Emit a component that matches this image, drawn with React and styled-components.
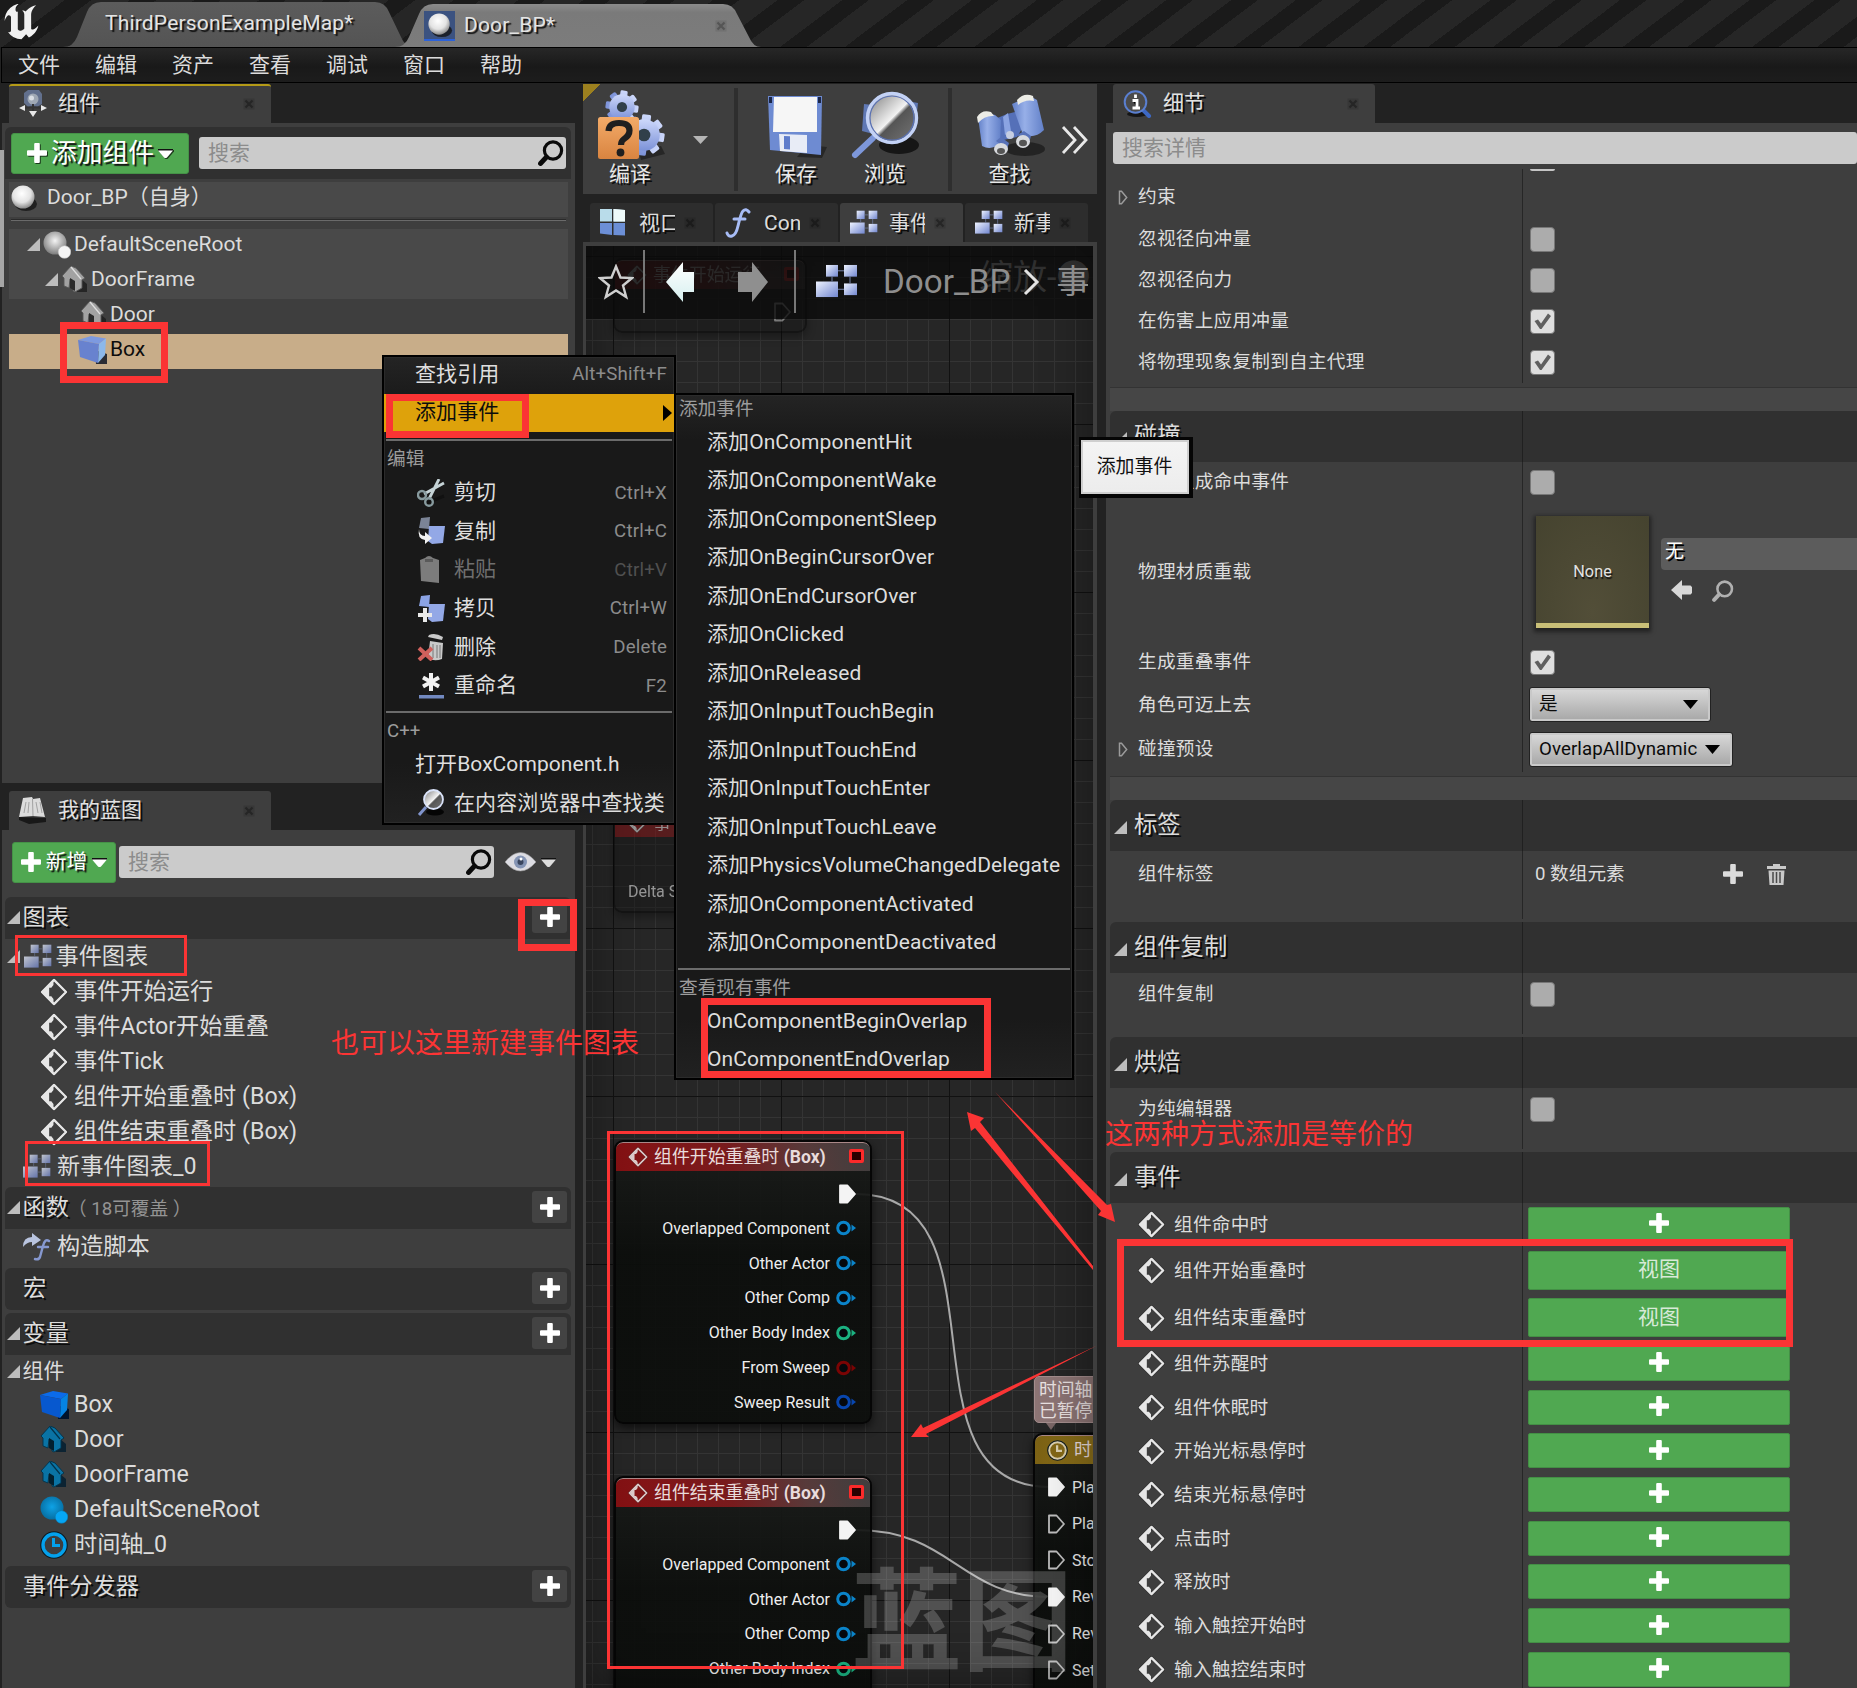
import React from 'react';
import styled, { createGlobalStyle, css } from 'styled-components';

const RED = '#fb3434';
const FONT = 'Roboto, "Noto Sans CJK SC", sans-serif';

const GlobalStyle = createGlobalStyle`
  *, *::before, *::after { box-sizing: border-box; }
  html, body { margin: 0; padding: 0; background: #222; overflow: hidden; }
  body { font-family: ${FONT}; font-size: 21px; color: #dcdcdc; }
  svg { display: block; flex: none; }
`;

/* ---------- icons ---------- */

const UnrealLogo = () => (
  <svg width="36" height="36" viewBox="4 4.9 15.4 14.8" preserveAspectRatio="none">
    <path fill="#f1f1f1" d="M19.13 13.729c-.206.997-1.126 3.557-4.06 4.942l-1.179-1.325-1.988 2a7.338 7.338 0 0 1-5.804-2.978 2.859 2.859 0 0 0 .65.123c.326.006.678-.114.678-.66v-5.394a.89.89 0 0 0-1.116-.89c-.92.212-1.656 2.509-1.656 2.509a7.304 7.304 0 0 1 2.528-5.597 7.408 7.408 0 0 1 3.73-1.721c-1.006.573-1.57 1.507-1.57 2.29 0 1.262.76 1.109.984.923v7.28a1.157 1.157 0 0 0 .148.256 1.075 1.075 0 0 0 .88.445c.76 0 1.747-.868 1.747-.868V9.172c0-.6-.452-1.324-.905-1.572 0 0 .838-.149 1.484.346a5.537 5.537 0 0 1 .387-.425c1.508-1.48 2.929-1.902 4.112-2.112 0 0-2.151 1.69-2.151 3.96 0 1.687.043 5.801.043 5.801.799.771 1.986-.342 3.059-1.441Z" />
  </svg>
);

const Defs = () => (
  <svg width="0" height="0" style={{ position: 'absolute' }}>
    <defs>
      <radialGradient id="ball" cx="45%" cy="35%" r="65%">
        <stop offset="0" stopColor="#fff" /><stop offset=".6" stopColor="#e3e3e3" /><stop offset="1" stopColor="#8a8a8a" />
      </radialGradient>
      <radialGradient id="ballGrey" cx="50%" cy="40%" r="60%">
        <stop offset="0" stopColor="#f4f4f4" /><stop offset="1" stopColor="#7d7d7d" />
      </radialGradient>
      <radialGradient id="ballBlue" cx="50%" cy="45%" r="60%">
        <stop offset="0" stopColor="#0ea2e6" /><stop offset="1" stopColor="#066a9c" />
      </radialGradient>
      <linearGradient id="blue" x1="0" y1="0" x2="1" y2="1">
        <stop offset="0" stopColor="#eef3ff" /><stop offset="1" stopColor="#7186cf" />
      </linearGradient>
      <linearGradient id="steel" x1="0" y1="0" x2="0" y2="1">
        <stop offset="0" stopColor="#cdd8fb" /><stop offset="1" stopColor="#7c92d8" />
      </linearGradient>
      <linearGradient id="orange" x1="0" y1="0" x2="0" y2="1">
        <stop offset="0" stopColor="#f3ab69" /><stop offset="1" stopColor="#d98440" />
      </linearGradient>
      <linearGradient id="lens" x1="0" y1="0" x2="1" y2="1">
        <stop offset="0" stopColor="#777" /><stop offset=".5" stopColor="#f2f2f2" /><stop offset=".56" stopColor="#555" /><stop offset="1" stopColor="#777" />
      </linearGradient>
      <linearGradient id="backArrow" x1="0" y1="0" x2="0" y2="1">
        <stop offset="0" stopColor="#fff" /><stop offset="1" stopColor="#d6efef" />
      </linearGradient>
      <linearGradient id="barrel" x1="0" y1="0" x2="1" y2="0">
        <stop offset="0" stopColor="#6280c8" /><stop offset=".4" stopColor="#97afe8" /><stop offset="1" stopColor="#6280c8" />
      </linearGradient>
    </defs>
  </svg>
);

const PlusIcon = ({ s = 20, c = '#fff' }) => (
  <svg width={s} height={s} viewBox="0 0 20 20"><path fill={c} d="M7.2 1a1 1 0 0 1 1-1h3.6a1 1 0 0 1 1 1v6.2H19a1 1 0 0 1 1 1v3.6a1 1 0 0 1-1 1h-6.2V19a1 1 0 0 1-1 1H8.200a1 1 0 0 1-1-1v-6.200H1a1 1 0 0 1-1-1V8.200a1 1 0 0 1 1-1h6.200z" /></svg>
);
const Glass = ({ s = 26, c = '#0a0a0a', w = 3.2 }) => (
  <svg width={s} height={s} viewBox="0 0 26 26" fill="none" stroke={c}>
    <circle cx="15" cy="10.500" r="8.600" strokeWidth={w} /><path d="M8.500 17L2.500 23.500" strokeWidth={w + 1.6} strokeLinecap="round" />
  </svg>
);
const Caret = ({ w = 15, h = 9, c = '#fff', edge }) => (
  <svg width={w} height={h} viewBox="0 0 15 9" preserveAspectRatio="none">
    {edge && <path d="M0 0H15V2H0z" fill="#111" />}
    <path fill={c} d={edge ? 'M0 1.500H15L9 8.500Q7.500 9.500 6 8.500Z' : 'M0 0H15L7.500 9Z'} />
  </svg>
);
const Expanded = ({ s = 13 }) => (
  <svg width={s} height={s} viewBox="0 0 13 13"><path fill="#bdbdbd" d="M13 0V13H0Z" /></svg>
);
const Collapsed = () => (
  <svg width="10" height="15" viewBox="0 0 10 15"><path d="M1.500 1.200L3.500 1.200L8.700 7.500L3.500 13.800H1.500Z" fill="none" stroke="#9b9b9b" strokeWidth="1.500" /></svg>
);
const CloseIcon = ({ c = '#252525' }) => (
  <svg width="12" height="12" viewBox="0 0 12 12"><path d="M.5 .5H11.500V11.500H.5Z" fill={c} opacity=".25" /><path d="M2.500 2.500L9.500 9.500M9.500 2.500L2.500 9.500" stroke={c} strokeWidth="2.200" /></svg>
);
const EventIcon = ({ s = 27, c = '#e6e6e6' }) => (
  <svg width={s} height={s} viewBox="0 0 26 26">
    <path d="M13 1.500L24.500 13L13 24.500L1.500 13Z" fill="none" stroke="#1b1b1b" strokeWidth="3" opacity=".4" />
    <path d="M13 1.800L24.200 13L13 24.200L1.800 13Z" fill="none" stroke={c} strokeWidth="2.200" strokeLinejoin="round" />
    <path d="M2 13L12.500 2.500V6.500L10.500 9H8.500V17H10.500L12.500 19.500V23.500Z" fill={c} />
  </svg>
);
const GraphIcon = ({ w = 28, h = 25, dim = 1 }) => (
  <svg width={w} height={h} viewBox="0 0 42 36" opacity={dim} preserveAspectRatio="none">
    <g fill="url(#blue)">
      <rect x="10" y="1" width="12" height="12" /><rect x="28" y="1" width="13" height="12" />
      <rect x="0" y="18" width="22" height="16" /><rect x="28" y="20" width="13" height="12" />
    </g>
    <path d="M22 7H28M34 13V20M16 13V18M22 26H28" stroke="#7683ab" strokeWidth="1" />
  </svg>
);
const SphereIcon = ({ s = 28 }) => (
  <svg width={s} height={s} viewBox="0 0 28 28"><ellipse cx="16" cy="20" rx="11" ry="7" fill="#151515" opacity=".8" /><circle cx="13" cy="13" r="11.500" fill="url(#ball)" /></svg>
);
const SceneIcon = ({ blue }) => (
  <svg width="28" height="28" viewBox="0 0 28 28">
    <circle cx="12" cy="12" r="11.500" fill={blue ? 'url(#ballBlue)' : 'url(#ballGrey)'} />
    <circle cx="21.500" cy="21" r="6.300" fill={blue ? '#06a6f4' : '#f5f5f5'} stroke={blue ? '#0b78ad' : '#bbb'} strokeWidth=".6" />
  </svg>
);
const HouseIcon = ({ blue }) => (
  <svg width="27" height="27" viewBox="0 0 27 27">
    <path d="M14 8L26 18V26H16Z" fill={blue ? '#001d30' : '#1d1d1d'} opacity=".8" />
    <path d="M1 10L10 0L15 2L24 12L21 14V22L14 26L12 25V15L9 13L8 22L3 20V12Z" fill={blue ? '#0a73a4' : '#a2a2a2'} stroke={blue ? '#02324a' : '#555'} strokeWidth=".9" />
    <path d="M10 1L20 13" stroke={blue ? '#02324a' : '#e0e0e0'} strokeWidth="1.200" />
    <path d="M9 12L14 15V25L9 22Z" fill={blue ? '#02202f' : '#2a2a2a'} />
  </svg>
);
const CubeIcon = ({ blue }) => (
  <svg width="29" height="28" viewBox="0 0 29 28">
    <path d="M17 14L29 18V28H18Z" fill={blue ? '#00142c' : '#2a2c33'} />
    <path d="M0 4L13 0L28 2.500L21 8Z" fill={blue ? '#0b6bea' : '#7d9ae0'} />
    <path d="M0 4L21 8L20 27L2 21Z" fill={blue ? '#0758cf' : '#6882cf'} />
    <path d="M21 8L28 2.500L27 19L20 27Z" fill={blue ? '#0483e2' : '#8cb8ea'} />
  </svg>
);
const ClockIcon = ({ s = 28, c = '#04a1ec', w = 3.4 }) => (
  <svg width={s} height={s} viewBox="0 0 28 28" fill="none">
    <circle cx="14" cy="14" r="12.800" stroke="#0d1a20" strokeWidth="2" />
    <circle cx="14" cy="14" r="11" stroke={c} strokeWidth={w} /><path d="M13.500 7V14.500H20" stroke={c} strokeWidth="3" />
  </svg>
);
const EyeIcon = () => (
  <svg width="31" height="20" viewBox="0 0 31 20">
    <path d="M0 10Q15.500-9 31 10Q15.500 28 0 10Z" fill="#dcdce2" stroke="#999" strokeWidth=".6" />
    <circle cx="15.500" cy="10" r="6.500" fill="#8494b4" /><circle cx="15.500" cy="10" r="3" fill="#39455e" /><circle cx="16" cy="7" r="1.500" fill="#fff" />
  </svg>
);
const BookIcon = () => (
  <svg width="28" height="27" viewBox="0 0 28 27">
    <path d="M0 20L27 21V25L10 27L0 23Z" fill="#181818" />
    <path d="M4 1L13 0L14 2L21 1L26 20L14 19L0 20Z" fill="#dcdcdc" /><path d="M13.500 2L14 19M7 5L5 16M10 5L9 16M17 5L19 16M21 5L23 16" stroke="#a2a2a2" strokeWidth="1" />
  </svg>
);
const ComponentsIcon = () => (
  <svg width="28" height="27" viewBox="0 0 28 27">
    <path d="M5 3L9 0H20L23 4V14L18 17H9L5 13Z" fill="#62708d" /><circle cx="14" cy="9" r="5.500" fill="#9fa8b4" /><circle cx="12.500" cy="8" r="2.500" fill="#d9dee4" />
    <path d="M14 14V23M14 17L4 18M14 17L24 18" stroke="#333" strokeWidth="2" />
    <path d="M10 21H18L14 27ZM0 18L6 15V21ZM28 18L22 15V21Z" fill="#e8e8e8" />
  </svg>
);
const DetailsIcon = () => (
  <svg width="29" height="28" viewBox="0 0 29 28">
    <ellipse cx="14" cy="24" rx="10" ry="3" fill="#151515" />
    <path d="M19 19L26 26" stroke="#3d68c4" strokeWidth="4" strokeLinecap="round" />
    <circle cx="12.500" cy="12" r="10.800" fill="#4b4b4b" stroke="#5a7fd0" strokeWidth="2" />
    <path d="M12.500 4.500V8M9.500 10.500H14V17.500M9.500 18H17" stroke="#fff" strokeWidth="2.800" />
  </svg>
);
const WindowsIcon = () => (
  <svg width="26" height="27" viewBox="0 0 26 27">
    <path d="M0 0H12V12.500H0ZM13.500 0L25 1V12.500H13.500Z" fill="#b9dcea" /><path d="M13.500 0L25 1V12.500H13.500Z" fill="#eefafa" />
    <path d="M0 14H12V26L0 24.500ZM13.500 14H25V26.500L13.500 26Z" fill="#6c8fd6" />
  </svg>
);
const FunctionIcon = () => (
  <svg width="26" height="30" viewBox="0 0 26 30">
    <path d="M24 4Q21 0 18 3Q16 5 13 18Q11 27 7 28Q3 29 2 25M9 11H20" fill="none" stroke="#a7bcf5" strokeWidth="3" strokeLinecap="round" />
  </svg>
);
const ConstructIcon = () => (
  <svg width="28" height="28" viewBox="0 0 28 28">
    <path d="M0 14Q0 4 9 4V0L18 7L9 13V9Q4 9 0 14Z" fill="#b9c4df" />
    <path d="M26 8Q22 5 20 13L17 24Q16 27 12 26M15 14H25" fill="none" stroke="#8698cf" strokeWidth="2.400" strokeLinecap="round" />
  </svg>
);
const Gear = ({ x, y, r }) => (
  <g transform={`translate(${x} ${y})`} fill="url(#steel)">
    {[0, 45, 90, 135].map((a) => <rect key={a} x={-r * 0.22} y={-r} width={r * 0.44} height={r * 2} rx="1.500" transform={`rotate(${a + 8})`} />)}
    <circle r={r * 0.77} /><circle r={r * 0.31} fill="#31404a" />
  </g>
);
const CompileIcon = () => (
  <svg width="70" height="70" viewBox="0 0 70 70">
    <path d="M42 62L64 56L68 64L44 70Z" fill="#262626" />
    <Gear x={25} y={17} r={16.5} /><Gear x={47} y={45} r={20.500} />
    <rect x="1" y="27" width="41" height="42" rx="2.500" fill="url(#orange)" />
    <path d="M11.500 41Q12 33 22 33Q32.500 33 32.500 40.500Q32.500 45.500 27 49Q24 51 24 55" fill="none" stroke="#1f1f1f" strokeWidth="6.200" />
    <circle cx="23.500" cy="62.500" r="3.900" fill="#1f1f1f" />
  </svg>
);
const SaveIcon = () => (
  <svg width="62" height="64" viewBox="0 0 62 64">
    <path d="M40 50L60 52L55 63L30 62Z" fill="#222" opacity=".8" />
    <path d="M1 1H55L54 60L3 55Z" fill="#6e8bd2" /><path d="M7 2H50V37H6Z" fill="#f6f6f6" />
    <path d="M12 39L40 40V58L13 56Z" fill="#e8ecf6" /><path d="M17 41L23 41.300V54.500L17 54Z" fill="#5e7ccb" />
    <rect x="2" y="2" width="3" height="6" fill="#1c2748" /><rect x="51" y="2" width="3" height="6" fill="#1c2748" />
  </svg>
);
const BrowseIcon = () => (
  <svg width="70" height="68" viewBox="0 0 70 68">
    <ellipse cx="48" cy="54" rx="20" ry="9" fill="#161616" />
    <path d="M13 13L30 15V45L11 40ZM56 10L67 12L64 40H56Z" fill="#5f78b4" />
    <path d="M22 47L4 64" stroke="#7d97da" strokeWidth="6" strokeLinecap="round" />
    <circle cx="41" cy="27" r="24.500" fill="url(#lens)" stroke="#c3d2f6" strokeWidth="3.400" />
    <circle cx="41" cy="27" r="22" fill="none" stroke="#5870b4" strokeWidth="1.200" />
  </svg>
);
const FindIcon = () => (
  <svg width="68" height="66" viewBox="0 0 68 66">
    <ellipse cx="48" cy="56" rx="20" ry="7" fill="#1d1d1d" opacity=".8" />
    <path d="M18 26L30 21L42 18L46 34L40 44L22 48Z" fill="#5570b8" />
    <path d="M26 24L31 20L34 38L28 42Z" fill="#8ba4e2" />
    <path d="M1 24Q9 18 18 22L24 27L23 50Q15 58 5 53Z" fill="url(#barrel)" /><path d="M0 24Q5 16 14 19L17 23Q8 22 1 30Z" fill="#ecece6" />
    <path d="M35 11L53 3L60 7L67 37Q58 46 46 42Z" fill="url(#barrel)" /><path d="M40 7Q47-1 56 3L57 8Q48 6 41 12Z" fill="#ecece6" />
    <path d="M19 48L24 44L32 50L30 56ZM40 42L47 38L54 43L52 50Z" fill="#5872b8" />
    <ellipse cx="24" cy="56" rx="7" ry="6" fill="#d8dade" /><ellipse cx="24" cy="58" rx="4" ry="3" fill="#555" />
    <ellipse cx="46" cy="48.500" rx="7" ry="6.500" fill="#d8dade" /><ellipse cx="46" cy="50" rx="4" ry="3.300" fill="#555" /><circle cx="33" cy="42" r="4" fill="#c5cde2" />
  </svg>
);
const ScissorsIcon = () => (
  <svg width="28" height="28" viewBox="0 0 28 28" fill="none">
    <path d="M10 24L27 17" stroke="#111" strokeWidth="3" />
    <path d="M7 15L27 4M12 20L22 0" stroke="#c5d3d6" strokeWidth="2.800" />
    <circle cx="5" cy="16" r="4" stroke="#879a9e" strokeWidth="2.400" /><circle cx="12" cy="23" r="3.800" stroke="#879a9e" strokeWidth="2.400" />
  </svg>
);
const CopyIcon = ({ plus }) => (
  <svg width="28" height="28" viewBox="0 0 28 28">
    <path d="M4 1L13 0L12 12L2 11Z" fill={plus ? '#8ba3e4' : '#7b8496'} /><path d="M12 9L28 9L26 26L15 27L11 24Z" fill="#93a8e6" />
    {plus ? <path d="M8 13V27M1 20H15" stroke="#e9e9e9" strokeWidth="4" /> : <path d="M2 12Q2 19 8 19V15L15 21L8 27V23Q0 22 2 12Z" fill="#f2f2f2" />}
  </svg>
);
const PasteIcon = () => (
  <svg width="28" height="28" viewBox="0 0 28 28"><path d="M3 4L8 2Q12-2 16 2L22 4V27L4 25Z" fill="#7c7c7c" /><path d="M8 3H16V6H8Z" fill="#5a5a5a" /></svg>
);
const DeleteIcon = () => (
  <svg width="28" height="28" viewBox="0 0 28 28">
    <path d="M12 2Q18-1 26 4L25 7L11 4ZM13 8L26 10L25 26Q17 29 11 25Z" fill="#c9c9c9" /><path d="M16 11V25M20 12V25M23 12V25" stroke="#777" />
    <path d="M2 15L15 27M15 15L2 27" stroke="#d0605c" strokeWidth="4" />
  </svg>
);
const RenameIcon = () => (
  <svg width="28" height="28" viewBox="0 0 28 28"><path d="M14 1V19M6 5.500L22 14.500M22 5.500L6 14.500" stroke="#f1f1f1" strokeWidth="4" /><rect x="2" y="23" width="25" height="3.500" fill="#7289c0" /></svg>
);
const BrowserIcon = () => (
  <svg width="28" height="28" viewBox="0 0 28 28">
    <ellipse cx="18" cy="23" rx="9" ry="3.500" fill="#050505" /><path d="M9 18L2 26" stroke="#8094cc" strokeWidth="3" />
    <circle cx="16.500" cy="10.500" r="9.500" fill="url(#lens)" stroke="#dbe4fa" strokeWidth="1.800" />
  </svg>
);
const TrashIcon = () => (
  <svg width="19" height="21" viewBox="0 0 19 21"><path d="M6 0H13V2H19V5H0V2H6ZM1.500 6.500H17.500L16.500 21H2.500Z" fill="#c9c9c9" /><path d="M6 8V19M9.500 8V19M13 8V19" stroke="#4a4a4a" strokeWidth="1.500" /></svg>
);
const UseArrow = () => (
  <svg width="21" height="20" viewBox="0 0 21 20"><path d="M0 10L11 0V5.500H19.500L21 7V13L19.500 14.500H11V20Z" fill="#d8d8d8" /></svg>
);
const CheckMark = () => (
  <svg width="19" height="18" viewBox="0 0 19 18"><path d="M1.500 9L5 7.500L8 11.500L15 1.500L18 4L8.500 17H7Z" fill="#5f5f5f" /></svg>
);

/* ---------- window frame ---------- */

const Window = styled.div`
  position: relative; width: 1857px; height: 1688px; overflow: hidden;
  background: #222; display: flex; flex-direction: column; line-height: 1.2; white-space: nowrap;
`;
const TitleBar = styled.header`
  height: 47px; display: flex; align-items: flex-end; padding-left: 3px; flex: none;
  background: repeating-linear-gradient(143deg, #1a1a1a 0 16px, #262626 16px 39px);
`;
const LogoBox = styled.div`width: 60px; height: 43px;`;
const WindowTab = styled.div`
  width: ${(p) => p.w}px; height: ${(p) => p.h}px; margin-right: ${(p) => p.overlap || 0}px;
  display: flex; align-items: center; padding: 0 0 ${(p) => (p.active ? 0 : 1)}px ${(p) => p.pad}px; color: #e4e4e4;
  text-shadow: 2px 2px 1px #111; letter-spacing: .18px;
  background: ${(p) => (p.active ? 'linear-gradient(#8b8b8b, #7a7a7a 20%, #7c7c7c)' : 'linear-gradient(#5c5c5c, #545454)')};
  clip-path: path('${(p) => `M0 ${p.h}Q10 ${p.h} 14 ${p.h - 10}L24 10Q28 0 38 0H${p.w - 38}Q${p.w - 28} 0 ${p.w - 24} 10L${p.w - 12} ${p.h - 10}Q${p.w - 8} ${p.h} ${p.w} ${p.h}Z`}');
`;
const TabThumb = styled.span`
  width: 31px; height: 30px; margin-right: 9px; background: #3b5280; border-bottom: 2px solid #2c62d9;
  display: grid; place-items: center;
`;
const TabClose = styled.span`margin-left: auto; margin-right: 34px;`;
const MenuBar = styled.nav`
  height: 36px; margin: 0 0 1px 1px; display: flex; align-items: center; gap: 35px; padding: 1px 0 0 16px; flex: none;
  border: 1px solid #000; border-width: 1px 0 1.500px 1px;
  background: linear-gradient(#272727, #191919 55%, #1d1d1d);
`;
const Body = styled.main`
  flex: 1; min-height: 0; display: flex; gap: 8px; padding-left: 2px;
`;
const LeftColumn = styled.div`width: 573px; display: flex; flex-direction: column; gap: 8px; flex: none;`;
const CenterColumn = styled.div`width: 514px; display: flex; flex-direction: column; flex: none;`;
const RightColumn = styled.div`flex: 1; min-width: 0; display: flex; flex-direction: column; margin-left: 1px;`;

const PanelTab = styled.div`
  width: 262px; height: 39px; margin-left: 7px; background: #3e3e3e; flex: none;
  border-top: ${(p) => (p.focused ? '2px solid #b49a17' : 0)}; border-radius: 3px 3px 0 0;
  display: flex; align-items: center; padding: 0 16px ${(p) => (p.focused ? 2 : 0)}px 10px; text-shadow: 2px 2px 0 #0c0c0c; color: #e2e2e2;
  > span { margin-left: 11px; margin-right: auto; }
`;
const Panel = styled.section`
  background: #3e3e3e; flex: ${(p) => (p.h ? 'none' : 1)}; height: ${(p) => (p.h ? `${p.h}px` : 'auto')};
  min-height: 0; display: flex; flex-direction: column;
`;
const PanelGroup = styled.div`flex: 1; min-height: 0; display: flex; flex-direction: column;`;
const SearchField = styled.div`
  height: 32px; background: #cbcbcb; border-radius: 3px; flex: ${(p) => (p.w ? 'none' : 1)}; width: ${(p) => p.w || 0}px;
  display: flex; align-items: center; justify-content: space-between; padding: 0 2px 0 9px; color: #8c8c8c;
  line-height: 30px;
`;
const GreenButton = styled.button`
  font: inherit; font-size: ${(p) => p.size}px; width: ${(p) => p.w}px; height: 41px; padding: 0; border: 1px solid #459247; border-radius: 3px;
  background: #50a851; color: #fff; text-shadow: 2px 2px 1px #111; display: flex; align-items: center; justify-content: center; gap: ${(p) => p.gap}px;
  svg { filter: ${(p) => (p.soft ? 'none' : 'drop-shadow(1px 1px 0 #1c3a1c)')}; }
`;

/* ---------- component tree ---------- */

const ComponentsBar = styled.div`
  margin: 4px 4px 0 3px; height: 52px; background: #303030; border-radius: 6px 6px 0 0; display: flex; align-items: center;
  padding: 0 5px 0 6px; gap: 10px;
`;
const TreeRow = styled.div`
  height: 35px; margin: ${(p) => p.mt || 0}px 7px 0; padding: 0 0 4px ${(p) => p.indent}px; display: flex; align-items: center; flex: none; gap: ${(p) => p.gap || 3}px;
  ${(p) => p.raised && css`background: #494949;`}
  ${(p) => p.selected && css`background: #c8ad89; color: #0c0c0c;`}
`;
const TreeRule = styled.div`height: 2px; margin: 2px 9px 8px; background: #6a6a6a; border-top: 1px solid #2a2a2a; flex: none;`;

/* ---------- my blueprint ---------- */

const BlueprintBar = styled.div`height: 67px; display: flex; align-items: center; padding: 0 0 3px 10px; gap: 3px; flex: none;`;
const ViewOptions = styled.div`display: flex; align-items: center; gap: 5px; margin-left: 8px;`;
const GroupHeader = styled.div`
  height: 42px; margin: ${(p) => p.mt || 0}px 4px 0 3px; background: #303030; border-radius: 6px 6px ${(p) => (p.empty ? '6px 6px' : '0 0')};
  display: flex; align-items: center; padding: 0 4px 2px ${(p) => (p.empty ? 18 : 1.5)}px; flex: none;
  font-size: 23.2px; text-shadow: 2px 2px 0 #0c0c0c; gap: 3px; line-height: 40px;
`;
const Muted = styled.span`font-size: 18.67px; color: #949494; text-shadow: none; margin-left: -4px; padding-top: 4px;`;
const AddButton = styled.button`
  margin: 0 0 0 auto; width: 35px; height: 32px; padding: 0 0 1px; border: 0; border-radius: 3px; background: #434343; display: grid; place-items: center;
`;
const ListRow = styled.div`
  height: ${(p) => p.h || 35}px; display: flex; align-items: center; padding-left: ${(p) => p.indent}px; gap: ${(p) => p.gap || 6}px; flex: none;
  font-size: ${(p) => p.size || 23.2}px; line-height: 35px;
`;

/* ---------- toolbar ---------- */

const Toolbar = styled.div`
  height: 110px; background: linear-gradient(135deg, #9c801f 0 12.500px, #3e3e3e 12.500px); display: flex; align-items: stretch; flex: none; padding-top: 7px;
`;
const Tool = styled.div`
  width: ${(p) => p.w}px; margin-left: ${(p) => p.ml || 0}px; display: flex; flex-direction: column; align-items: center; justify-content: flex-end;
  padding-bottom: 6px; gap: ${(p) => p.gap ?? 1}px; text-shadow: 2px 2px 0 #0c0c0c; color: #e8e8e8; line-height: 28px;
`;
const ToolRule = styled.div`width: 4px; background: #2e2e2e; margin: -3px 0 3px ${(p) => p.ml}px;`;
const ToolCaret = styled.div`align-self: center; margin: -5px 0 0 ${(p) => p.ml}px;`;
const DocTabs = styled.div`height: 48px; padding: 9px 0 0 7px; display: flex; gap: 2px; flex: none;`;
const DocTab = styled.div`
  width: 123px; height: 39px; background: ${(p) => (p.active ? '#3e3e3e' : '#2d2d2d')}; border-radius: 3px 3px 0 0; display: flex; align-items: center;
  padding-left: 10px; text-shadow: 2px 2px 0 #0c0c0c;
`;
const DocIcon = styled.span`width: 39px;`;
const DocName = styled.span`width: 36px; overflow: hidden; margin-right: 9px; line-height: 32px;`;

/* ---------- graph ---------- */

const GraphFrame = styled.div`flex: 1; min-height: 0; border: solid #3e3e3e; border-width: 4px 4px 0 3px; display: flex;`;
const Graph = styled.div`
  flex: 1; position: relative; overflow: hidden; background-color: #262626;
  background-image:
    linear-gradient(90deg, #111 1.500px, transparent 1.500px), linear-gradient(#111 1.500px, transparent 1.500px),
    linear-gradient(90deg, #343434 1px, transparent 1px), linear-gradient(#343434 1px, transparent 1px);
  background-size: 168px 168px, 168px 168px, 21px 21px, 21px 21px;
  background-position: 27px 10px;
  &::after { content: ''; position: absolute; inset: 0; box-shadow: inset 0 0 50px rgba(0,0,0,.4); pointer-events: none; }
`;
const Canvas = styled.div`position: absolute; left: -586px; top: -246px; width: 1857px; height: 1688px; font-size: 16px; color: #eee;`;
const Wires = styled.svg`position: absolute; inset: 0;`;
const Node = styled.div`
  position: absolute; left: ${(p) => p.x}px; top: ${(p) => p.y}px; width: ${(p) => p.w}px; height: ${(p) => p.h}px;
  border: 2px solid #060606; border-radius: 9px; background: ${(p) => (p.faded ? 'rgba(20,20,20,.75)' : 'linear-gradient(rgba(26,28,26,.93), rgba(12,14,12,.93) 40%)')};
  box-shadow: 0 4px 10px rgba(0,0,0,.6); overflow: hidden; opacity: ${(p) => (p.faded ? 0.55 : 1)};
`;
const NodeTitle = styled.div`
  height: 29px; display: flex; align-items: center; gap: 6px; padding: 0 6px 0 12px; font-size: 17.9px; color: #e9dcdc; border-top: 1px solid #a88;
  border-radius: 7px 7px 0 0;
  background: ${(p) => (p.gold ? 'linear-gradient(100deg, #7b6114, #987a1d 50%, #8a6d18)' : 'linear-gradient(75deg, #871113 0, #781b1d 45%, #573a3a 75%, #3f3e3e)')};
  b { font-size: 17.500px; }
  > i { margin-left: auto; width: 15px; height: 14px; border: 3.500px solid #fb2a2a; border-radius: 2px; background: #2a0000; margin-top: -3px; }
`;
const PinRow = styled.div`
  height: ${(p) => p.h || 34.8}px; display: flex; align-items: center; gap: ${(p) => p.gap || 6}px;
  ${(p) => (p.left ? css`padding-left: 13px;` : css`justify-content: flex-end; padding-right: 14px;`)}
`;
const PinStack = styled.div`padding-top: ${(p) => p.top}px; margin-top: ${(p) => p.pull || 0}px;`;
const Bubble = styled.div`
  position: absolute; left: 1034px; top: 1376px; width: 90px; height: 47px; border-radius: 5px; background: #8c7474; border: 1px solid #a38c8c;
  color: #e8e0e0; font-size: 17.8px; line-height: 21px; padding: 2px 4px;
  &::after { content: ''; position: absolute; left: 11px; top: 46px; border: 5px solid transparent; border-top: 7px solid #7a6666; }
`;
const Watermark = styled.div`
  position: absolute; left: 851px; top: 1544px; font: 700 111px/140px "Noto Sans CJK SC", sans-serif; color: rgba(255,255,255,.2);
`;
const ZoomLabel = styled.div`position: absolute; left: 979px; top: 252px; font-size: 34px; line-height: 50px; color: #b4b4b4;`;
const Breadcrumb = styled.div`
  position: absolute; left: 0; top: 0; width: 100%; height: 73px; background: rgba(10,10,10,.76); display: flex; align-items: center; z-index: 1;
  font-size: 33.2px; color: #8e8e8e; padding: 0 0 2px 12px; overflow: hidden;
`;
const CrumbRule = styled.div`width: 2px; height: 63px; background: #777; margin: ${(p) => p.m};`;
const CrumbText = styled.span`margin-left: ${(p) => p.ml}px; width: ${(p) => p.w}px; overflow: hidden; line-height: 46px;`;
const NavArrow = styled.span`width: ${(p) => p.w}px;`;

/* ---------- details ---------- */

const DetailsSearch = styled.div`height: 46px; padding: 9px 0 0 7px; display: flex; flex: none;`;
const PropertyList = styled.div`flex: 1; min-height: 0; overflow: hidden; padding-left: 4px; font-size: 18.67px;`;
const PropertyRow = styled.div`
  display: flex; height: ${(p) => p.h + (p.extra || 0)}px;
`;
const NameCell = styled.div`
  width: 413px; border-right: 1.500px solid #262626; display: flex; align-items: center; padding-left: 28px; padding-bottom: ${(p) => p.extra || 0}px; line-height: 24px;
  letter-spacing: .22px;
`;
const ExpandSlot = styled.span`width: 20px; margin-left: -20px;`;
const EventLabel = styled.span`margin-left: 9px;`;
const ValueCell = styled.div`flex: 1; min-width: 0; display: flex; align-items: center; padding-left: ${(p) => p.pad ?? 6.5}px; padding-bottom: ${(p) => p.extra || 0}px;`;
const Category = styled.div`
  height: 51px; margin-top: ${(p) => p.mt || 0}px; background: #303030; border-radius: 6px 0 0 0; display: flex; font-size: 23.3px; text-shadow: 2px 2px 0 #0c0c0c;
`;
const CategoryName = styled.div`width: 413px; border-right: 1.500px solid #202020; padding: 0 0 0 4px; display: flex; align-items: center; gap: 7px; svg { margin-top: 3px; }`;
const Band = styled.div`height: 24px; margin-top: ${(p) => p.mt}px; background: #464646; border-top: 1.500px solid #333;`;
const Checkbox = styled.span`
  width: 25px; height: 25px; border-radius: 4px; background: ${(p) => (p.on ? '#dedede' : '#acacac')}; border: 1px solid #777; display: grid; place-items: center; flex: none;
`;
const Sliver = styled.div`height: 2px; width: 25px; background: #c5c5c5; border-radius: 0 0 3px 3px; align-self: flex-start;`;
const Thumbnail = styled.div`
  width: 113px; height: 112px; background: radial-gradient(at 50% 90%, #524e38, #45432f); border-bottom: 5px solid #c9bf77; box-shadow: 0 2px 4px 2px #222;
  display: grid; place-items: center; font-size: 16.300px; text-shadow: 1px 2px 1px #111; color: #e2e2e2; flex: none; padding-top: 5px;
`;
const AssetPicker = styled.div`flex: 1; margin-left: 12px; height: 62px; margin-top: -6px; display: flex; flex-direction: column; gap: 10px;`;
const AssetName = styled.div`height: 32px; background: #5c5c5c; border-radius: 4px 0 0 4px; padding: 3px 0 0 4px; text-shadow: 2px 2px 0 #000; color: #fff; flex: none; font-size: 19px;`;
const AssetActions = styled.div`display: flex; gap: 20px; padding-left: 10px;`;
const Select = styled.div`
  width: ${(p) => p.w}px; height: 35px; border: 1px solid #222; border-radius: 3px; background: linear-gradient(#dadada, #a6a6a6); box-shadow: inset 0 0 0 2px #c9c9c9;
  color: #0b0b0b; display: flex; align-items: center; justify-content: space-between; padding: 0 12px 0 9px; letter-spacing: .1px;
`;
const ArrayActions = styled.div`display: flex; gap: 24px; margin-left: 98px;`;
const EventButton = styled.button`
  width: 262px; height: ${(p) => p.h}px; border: 1px solid #438f45; border-radius: 2px; background: #50a851; padding: 0 0 2px; display: grid; place-items: center;
  font: inherit; font-size: 21px; color: #d8ead8; line-height: 24px; margin-top: -1px;
`;

/* ---------- menus and notes over the editor ---------- */

const Menu = styled.div`
  position: absolute; left: ${(p) => p.x}px; top: ${(p) => p.y}px; width: ${(p) => p.w}px; height: ${(p) => p.h}px;
  border: 2px solid #000; background: linear-gradient(#242424, #191919 45px, #191919 calc(100% - 60px), #212121); box-shadow: inset 0 0 0 1px #2b2b2b;
`;
const MenuItem = styled.div`
  height: ${(p) => p.h || 38.5}px; padding: 0 7px ${(p) => p.pb || 0}px ${(p) => p.pad}px; display: flex; align-items: center; gap: 9px; color: #dedede; letter-spacing: .07px;
  ${(p) => p.hot && css`background: #dea20b; color: #0c0c0c; padding-right: 2px;`}
  ${(p) => p.off && css`color: #6f6f6f;`}
`;
const Shortcut = styled.span`margin-left: auto; font-size: 18.67px; letter-spacing: .18px; color: ${(p) => (p.off ? '#505050' : '#8c8c8c')};`;
const MenuHeading = styled.div`height: ${(p) => p.h}px; padding-left: 3px; font-size: 18.67px; line-height: ${(p) => p.h}px; color: #9c9c9c;`;
const MenuRule = styled.div`height: ${(p) => p.h}px; padding: ${(p) => p.t}px 2px 0; &::before { content: ''; display: block; height: 2px; background: #6b6b6b; }`;
const SubArrow = styled.span`margin-left: auto;`;
const Tooltip = styled.div`
  position: absolute; left: 1079px; top: 437px; width: 114px; height: 61px; border: solid #050505; border-width: 3px 4px 4px 2px; background: linear-gradient(#f4f4f4, #ececec);
  box-shadow: inset 0 0 0 2px #cfcfcf; color: #111; font-size: 18.9px; display: grid; place-items: center; padding-right: 1px;
`;
const Outline = styled.div`
  position: absolute; left: ${(p) => p.x}px; top: ${(p) => p.y}px; width: ${(p) => p.w}px; height: ${(p) => p.h}px; border: ${(p) => p.b}px solid ${RED};
`;
const Note = styled.div`position: absolute; left: ${(p) => p.x}px; top: ${(p) => p.y}px; font-size: 28px; line-height: 40px; color: ${RED};`;
const Arrows = styled.svg`position: absolute; left: 0; top: 0;`;
const EdgeStrip = styled.div`position: absolute; left: 0; top: 150px; width: 4px; height: 137px; background: #a6a6a6;`;

const ExecPin = ({ on }) => (
  <svg width="17" height="20" viewBox="0 0 17 20"><path d="M1 1.500H8.500L16 10L8.500 18.500H1Z" fill={on ? '#f4f4f4' : 'none'} stroke={on ? '#f4f4f4' : '#bdbdbd'} strokeWidth="1.800" strokeLinejoin="round" /></svg>
);
const DataPin = ({ c }) => (
  <svg width="20" height="16" viewBox="0 0 20 16"><circle cx="7.500" cy="8" r="5.800" fill="#05080c" stroke={c} strokeWidth="3" /><path d="M15.500 4.500L20 8L15.500 11.500Z" fill={c} /></svg>
);

const OVERLAP_PINS = [
  ['Overlapped Component', '#0b84c9'], ['Other Actor', '#0b84c9'], ['Other Comp', '#0b84c9'],
  ['Other Body Index', '#1bb281'], ['From Sweep', '#7a0404'], ['Sweep Result', '#0846ae'],
];
const EventNode = ({ y, title }) => (
  <Node x={614} y={y} w={258} h={284}>
    <NodeTitle><EventIcon s={20} c="#dccaca" /><span>{title} <b>(Box)</b></span><i /></NodeTitle>
    <PinRow h={46}><ExecPin on /></PinRow>
    <PinStack pull={-6}>
      {OVERLAP_PINS.map(([n, c]) => <PinRow key={n}>{n}<DataPin c={c} /></PinRow>)}
    </PinStack>
  </Node>
);

const TIMELINE_PINS = [['Play', 1], ['Play from Start', 0], ['Stop', 0], ['Reverse', 1], ['Reverse from End', 0], ['Set New Time', 0]];

const Prop = ({ h, extra, name, expand, pad, children }) => (
  <PropertyRow h={h} extra={extra}>
    <NameCell extra={extra}>{expand && <ExpandSlot><Collapsed /></ExpandSlot>}{name}</NameCell>
    <ValueCell extra={extra} pad={pad}>{children}</ValueCell>
  </PropertyRow>
);
const Check = ({ on }) => <Checkbox on={on ? 1 : 0}>{on && <CheckMark />}</Checkbox>;
const Cat = ({ name, mt }) => <Category mt={mt}><CategoryName><Expanded />{name}</CategoryName></Category>;
const Group = ({ name, note, empty, mt }) => (
  <GroupHeader mt={mt} empty={empty}>{!empty && <Expanded />}<span>{name}</span>{note && <Muted>{note}</Muted>}<AddButton><PlusIcon /></AddButton></GroupHeader>
);

const DETAIL_EVENTS = [
  ['组件命中时'], ['组件开始重叠时', 1], ['组件结束重叠时', 1], ['组件苏醒时'], ['组件休眠时'], ['开始光标悬停时'],
  ['结束光标悬停时'], ['点击时'], ['释放时'], ['输入触控开始时'], ['输入触控结束时'],
];
const ADD_EVENTS = [
  'OnComponentHit', 'OnComponentWake', 'OnComponentSleep', 'OnBeginCursorOver', 'OnEndCursorOver', 'OnClicked', 'OnReleased',
  'OnInputTouchBegin', 'OnInputTouchEnd', 'OnInputTouchEnter', 'OnInputTouchLeave', 'PhysicsVolumeChangedDelegate',
  'OnComponentActivated', 'OnComponentDeactivated',
];
const EDIT_ITEMS = [
  ['剪切', 'Ctrl+X', <ScissorsIcon />], ['复制', 'Ctrl+C', <CopyIcon />], ['粘贴', 'Ctrl+V', <PasteIcon />, true],
  ['拷贝', 'Ctrl+W', <CopyIcon plus />], ['删除', 'Delete', <DeleteIcon />], ['重命名', 'F2', <RenameIcon />],
];

export default function App() {
  return (
    <Window>
      <GlobalStyle />
      <Defs />
      <TitleBar>
        <LogoBox><UnrealLogo /></LogoBox>
        <WindowTab w={350} h={45} pad={42} overlap={-18}>ThirdPersonExampleMap*</WindowTab>
        <WindowTab w={366} h={43} pad={29} active>
          <TabThumb><SphereIcon s={26} /></TabThumb>Door_BP*<TabClose><CloseIcon c="#555" /></TabClose>
        </WindowTab>
      </TitleBar>
      <MenuBar>{['文件', '编辑', '资产', '查看', '调试', '窗口', '帮助'].map((m) => <span key={m}>{m}</span>)}</MenuBar>

      <Body>
        <LeftColumn>
          <div>
            <PanelTab focused><ComponentsIcon /><span>组件</span><CloseIcon /></PanelTab>
            <Panel h={660}>
              <ComponentsBar>
                <GreenButton w={178} size={25.8} gap={4}><PlusIcon />添加组件<Caret edge /></GreenButton>
                <SearchField>搜索<Glass /></SearchField>
              </ComponentsBar>
              <TreeRow raised indent={1} gap={9} mt={3}><SphereIcon />Door_BP（自身）</TreeRow>
              <TreeRule />
              <TreeRow raised indent={18}><Expanded /><SceneIcon />DefaultSceneRoot</TreeRow>
              <TreeRow raised indent={36}><Expanded /><HouseIcon />DoorFrame</TreeRow>
              <TreeRow indent={71}><HouseIcon />Door</TreeRow>
              <TreeRow selected indent={69}><CubeIcon />Box</TreeRow>
            </Panel>
          </div>
          <PanelGroup>
            <PanelTab><BookIcon /><span>我的蓝图</span><CloseIcon /></PanelTab>
            <Panel>
              <BlueprintBar>
                <GreenButton w={104} size={20.8} soft={1} gap={5}><PlusIcon />新增<Caret edge /></GreenButton>
                <SearchField w={375}>搜索<Glass /></SearchField>
                <ViewOptions><EyeIcon /><Caret edge c="#ddd" /></ViewOptions>
              </BlueprintBar>
              <Group name="图表" />
              <ListRow indent={4.5} gap={4}><Expanded /><GraphIcon dim={0.75} />事件图表</ListRow>
              {['事件开始运行', '事件Actor开始重叠', '事件Tick', '组件开始重叠时 (Box)', '组件结束重叠时 (Box)'].map((n) => (
                <ListRow key={n} indent={38}><EventIcon s={28} />{n}</ListRow>
              ))}
              <ListRow indent={21}><GraphIcon dim={0.75} />新事件图表_0</ListRow>
              <Group name="函数" note="（ 18可覆盖 ）" mt={3} />
              <ListRow indent={21}><ConstructIcon />构造脚本</ListRow>
              <Group name="宏" empty={1} mt={4} />
              <Group name="变量" mt={3} />
              <ListRow indent={4.5} h={32} size={21} gap={3}><Expanded />组件</ListRow>
              <ListRow indent={38} gap={5}><CubeIcon blue />Box</ListRow>
              <ListRow indent={38} gap={7}><HouseIcon blue />Door</ListRow>
              <ListRow indent={38} gap={7}><HouseIcon blue />DoorFrame</ListRow>
              <ListRow indent={38}><SceneIcon blue />DefaultSceneRoot</ListRow>
              <ListRow indent={38}><ClockIcon />时间轴_0</ListRow>
              <Group name="事件分发器" empty={1} mt={4} />
            </Panel>
          </PanelGroup>
        </LeftColumn>

        <CenterColumn>
          <Toolbar>
            <Tool w={72} ml={13} gap={0}><CompileIcon /><span style={{ marginRight: 4 }}>编译</span></Tool>
            <ToolCaret ml={25}><Caret c="#b5b5b5" h={8} /></ToolCaret>
            <ToolRule ml={26} />
            <Tool w={62} ml={29}><SaveIcon /><span style={{ marginRight: 4 }}>保存</span></Tool>
            <Tool w={70} ml={22}><BrowseIcon /><span style={{ marginRight: 2 }}>浏览</span></Tool>
            <ToolRule ml={27} />
            <Tool w={68} ml={25}><FindIcon /><span style={{ marginRight: 3 }}>查找</span></Tool>
            <ToolCaret ml={16}>
              <svg width="28" height="30" viewBox="0 0 28 30" fill="none" stroke="#e8e8e8" strokeWidth="2.800"><path d="M2 2L14 15L2 28M13 2L25 15L13 28" /></svg>
            </ToolCaret>
          </Toolbar>
          <DocTabs>
            <DocTab><DocIcon><WindowsIcon /></DocIcon><DocName>视口</DocName><CloseIcon c="#1b1b1b" /></DocTab>
            <DocTab><DocIcon><FunctionIcon /></DocIcon><DocName>Con</DocName><CloseIcon c="#1b1b1b" /></DocTab>
            <DocTab active><DocIcon><GraphIcon /></DocIcon><DocName>事件图表</DocName><CloseIcon /></DocTab>
            <DocTab><DocIcon><GraphIcon /></DocIcon><DocName>新事件图表</DocName><CloseIcon c="#1b1b1b" /></DocTab>
          </DocTabs>
          <GraphFrame>
            <Graph>
              <Canvas>
                <Wires width="1857" height="1688" fill="none" stroke="#a9a9a9" strokeWidth="2">
                  <path d="M856 1194C1015 1194 891 1487 1050 1487" />
                  <path d="M856 1530C952 1530 960 1597 1050 1597" />
                </Wires>
                <Node faded x={613} y={258} w={194} h={75}>
                  <NodeTitle><EventIcon s={20} /><span>事件开始运行</span><i /></NodeTitle>
                  <PinRow h={46}><ExecPin /></PinRow>
                </Node>
                <Node faded x={613} y={806} w={250} h={107}>
                  <NodeTitle><EventIcon s={20} /><span>事件Tick</span><i /></NodeTitle>
                  <PinRow h={38}><ExecPin /></PinRow>
                  <PinRow left={1} h={34}>Delta Seconds</PinRow>
                </Node>
                <EventNode y={1140} title="组件开始重叠时" />
                <EventNode y={1476} title="组件结束重叠时" />
                <Bubble>时间轴<br />已暂停</Bubble>
                <Node x={1033} y={1433} w={200} h={290}>
                  <NodeTitle gold><ClockIcon s={21} c="#d9cfb0" w={2.6} /><span>时间轴_0</span></NodeTitle>
                  <PinStack top={5}>
                    {TIMELINE_PINS.map(([n, on]) => <PinRow left={1} h={36.6} gap={7} key={n}><ExecPin on={on} />{n}</PinRow>)}
                  </PinStack>
                </Node>
                <ZoomLabel>缩放-●</ZoomLabel>
                <Watermark>蓝图</Watermark>
              </Canvas>
              <Breadcrumb>
                <svg width="36" height="36" viewBox="0 0 36 36" fill="none" stroke="#cfcfcf" strokeWidth="2.400"><path d="M18 2.500L22.500 13.500L34 14L25 21.500L28.200 33L18 26.500L7.800 33L11 21.500L2 14L13.500 13.500Z" /></svg>
                <CrumbRule m="0 21px 0 9px" />
                <NavArrow w={72}><svg width="28" height="40" viewBox="0 0 28 40"><path d="M0 20L17 0V10H28V30H17V40Z" fill="url(#backArrow)" /></svg></NavArrow>
                <NavArrow w={56}><svg width="30" height="40" viewBox="0 0 30 40"><path d="M30 20L14 0V10H0V30H14V40Z" fill="#8f8f8f" /></svg></NavArrow>
                <CrumbRule m="0 20px 0 0" />
                <GraphIcon w={42} h={35} />
                <CrumbText ml={25}>Door_BP</CrumbText>
                <svg width="18" height="28" viewBox="0 0 18 28" style={{ marginLeft: 13 }}><path d="M2 2L14 14L2 26" fill="none" stroke="#e4e4e4" strokeWidth="3" /></svg>
                <CrumbText ml={15} w={32}>事件图表</CrumbText>
              </Breadcrumb>
            </Graph>
          </GraphFrame>
        </CenterColumn>

        <RightColumn>
          <PanelTab><DetailsIcon /><span>细节</span><CloseIcon /></PanelTab>
          <Panel>
            <DetailsSearch><SearchField>搜索详情</SearchField></DetailsSearch>
            <PropertyList>
              <Prop h={7} name=""><Sliver /></Prop>
              <Prop h={42.5} name="约束" expand />
              <Prop h={41} name="忽视径向冲量"><Check /></Prop>
              <Prop h={41} name="忽视径向力"><Check /></Prop>
              <Prop h={41} name="在伤害上应用冲量"><Check on /></Prop>
              <Prop h={41} name="将物理现象复制到自主代理"><Check on /></Prop>
              <Band mt={4.5} />
              <Cat name="碰撞" />
              <Prop h={40} name="模拟生成命中事件"><Check /></Prop>
              <Prop h={140} name="物理材质重载" pad={13}>
                <Thumbnail>None</Thumbnail>
                <AssetPicker>
                  <AssetName>无</AssetName>
                  <AssetActions><UseArrow /><Glass s={22} c="#b0b0b0" w={3} /></AssetActions>
                </AssetPicker>
              </Prop>
              <Prop h={40} name="生成重叠事件"><Check on /></Prop>
              <Prop h={45} name="角色可迈上去" pad={6}><Select w={182}>是<Caret c="#000" h={9} /></Select></Prop>
              <Prop h={44.5} name="碰撞预设" expand pad={6}><Select w={204}>OverlapAllDynamic<Caret c="#000" h={9} /></Select></Prop>
              <Band mt={4.5} />
              <Cat name="标签" />
              <Prop h={46} extra={22} name="组件标签" pad={12}>0 数组元素<ArrayActions><PlusIcon c="#dcdcdc" /><TrashIcon /></ArrayActions></Prop>
              <Cat name="组件复制" mt={3} />
              <Prop h={42} extra={19} name="组件复制"><Check /></Prop>
              <Cat name="烘焙" mt={3} />
              <Prop h={42} extra={19} name="为纯编辑器"><Check /></Prop>
              <Cat name="事件" mt={3} />
              {DETAIL_EVENTS.map(([n, view]) => (
                <Prop key={n} h={view ? 47.7 : 43.7} pad={5} name={<><EventIcon s={27} /><EventLabel>{n}</EventLabel></>}>
                  <EventButton h={view ? 39 : 35}>{view ? '视图' : <PlusIcon />}</EventButton>
                </Prop>
              ))}
            </PropertyList>
          </Panel>
        </RightColumn>
      </Body>

      <EdgeStrip />
      <Outline x={60} y={322} w={108} h={61} b={7} />

      <Menu x={382} y={355} w={294} h={470}>
        <MenuItem h={37} pad={31} pb={2}>查找引用<Shortcut>Alt+Shift+F</Shortcut></MenuItem>
        <MenuItem h={38} pad={31} hot>添加事件<SubArrow><svg width="9" height="16" viewBox="0 0 9 16"><path d="M0 0L9 8L0 16Z" fill="#000" /></svg></SubArrow></MenuItem>
        <MenuRule h={13} t={6.5} />
        <MenuHeading h={28.5}>编辑</MenuHeading>
        {EDIT_ITEMS.map(([n, k, icon, off]) => (
          <MenuItem key={n} h={38.6} pad={33} off={off ? 1 : 0}>{icon}{n}<Shortcut off={off ? 1 : 0}>{k}</Shortcut></MenuItem>
        ))}
        <MenuRule h={12} t={5.5} />
        <MenuHeading h={28.5}>C++</MenuHeading>
        <MenuItem pad={31}>打开BoxComponent.h</MenuItem>
        <MenuItem pad={33}><BrowserIcon />在内容浏览器中查找类</MenuItem>
      </Menu>

      <Menu x={674} y={393} w={400} h={687}>
        <MenuHeading h={28}>添加事件</MenuHeading>
        {ADD_EVENTS.map((n) => <MenuItem key={n} h={38.5} pad={31}>添加{n}</MenuItem>)}
        <MenuRule h={12} t={6} />
        <MenuHeading h={28}>查看现有事件</MenuHeading>
        <MenuItem pad={31}>OnComponentBeginOverlap</MenuItem>
        <MenuItem pad={31}>OnComponentEndOverlap</MenuItem>
      </Menu>

      <Tooltip>添加事件</Tooltip>

      <Outline x={386} y={394} w={143} h={44} b={7} />
      <Outline x={701} y={998} w={290} h={80} b={7} />
      <Outline x={518} y={899} w={59} h={52} b={7} />
      <Outline x={15} y={935} w={172} h={41} b={3} />
      <Outline x={25} y={1141} w={185} h={45} b={3} />
      <Outline x={607} y={1131} w={297} h={538} b={3} />
      <Outline x={1117} y={1239} w={676} h={108} b={7} />
      <Note x={331} y={1024}>也可以这里新建事件图表</Note>
      <Note x={1105} y={1115}>这两种方式添加是等价的</Note>
      <Arrows width="1857" height="1688" fill={RED}>
        <path d="M995 1092L1107 1205L1111 1204L1115 1222L1098 1215L1101 1211Z" />
        <path d="M967 1112L984 1118L980 1122L1093 1266V1270L975 1128L971 1131Z" />
        <path d="M911 1437L921 1424L923 1428L1097 1345.500L926 1434L929 1437Z" />
      </Arrows>
    </Window>
  );
}
